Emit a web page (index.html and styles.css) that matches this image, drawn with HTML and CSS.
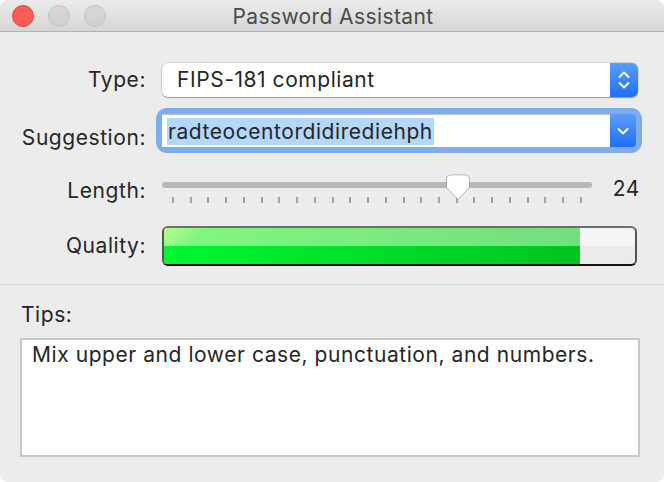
FILE: index.html
```html
<!DOCTYPE html>
<html>
<head>
<meta charset="utf-8">
<link rel="stylesheet" href="styles.css">
</head>
<body>
<div class="window">
  <div class="titlebar">
    <div class="lights">
      <span class="light red"></span>
      <span class="light gray"></span>
      <span class="light gray"></span>
    </div>
    <div class="title">Password Assistant</div>
    <div></div>
  </div>
  <div class="form">
    <div class="row row-type">
      <div class="label">Type:</div>
      <div class="select">
        <div class="select-text">FIPS-181 compliant</div>
        <div class="select-btn">
          <svg width="14" height="20" viewBox="0 0 14 20"><path d="M2.5 7 L7 2.5 L11.5 7 M2.5 13 L7 17.5 L11.5 13" fill="none" stroke="#fff" stroke-width="2" stroke-linecap="round" stroke-linejoin="round"/></svg>
        </div>
      </div>
    </div>
    <div class="row row-sugg">
      <div class="label label-sugg">Suggestion:</div>
      <div class="combo">
        <div class="combo-field"><span class="sel">radteocentordidirediehph</span></div>
        <div class="combo-btn">
          <svg width="14" height="10" viewBox="0 0 14 10"><path d="M2.5 3 L7 7.5 L11.5 3" fill="none" stroke="#fff" stroke-width="2" stroke-linecap="round" stroke-linejoin="round"/></svg>
        </div>
      </div>
    </div>
    <div class="row row-len">
      <div class="label label-len">Length:</div>
      <div class="slider">
        <div class="track"></div>
        <div class="rail">
          <div class="ticks">
            <i></i><i></i><i></i><i></i><i></i><i></i><i></i><i></i><i></i><i></i><i></i><i></i>
            <i></i><i></i><i></i><i></i><i></i><i></i><i></i><i></i><i></i><i></i><i></i><i></i>
          </div>
          <svg class="thumb" style="left:69.57%" width="25" height="27" viewBox="0 0 25 27"><path d="M5 1 H20 Q24 1 24 5 V13.5 L12.5 25.5 L1 13.5 V5 Q1 1 5 1 Z" fill="#fff" stroke="rgba(0,0,0,0.22)" stroke-width="1"/></svg>
        </div>
      </div>
      <div class="value">24</div>
    </div>
    <div class="row row-qual">
      <div class="label label-qual">Quality:</div>
      <div class="meter">
        <div class="meter-fill" style="width:88.3%"></div>
      </div>
    </div>
  </div>
  <div class="sep"></div>
  <div class="tips">
    <div class="tips-label">Tips:</div>
    <div class="tips-box">Mix upper and lower case, punctuation, and numbers.</div>
  </div>
</div>
</body>
</html>
```

FILE: styles.css
```css
html, body {
  margin: 0;
  padding: 0;
  background: #ffffff;
}
body {
  font-family: Inter, "Liberation Sans", sans-serif;
  font-size: 21px;
  letter-spacing: 0.56px;
  color: #262626;
}
.window {
  width: 664px;
  height: 482px;
  background: #ececec;
  border-radius: 8px;
  overflow: hidden;
  display: flex;
  flex-direction: column;
}
.titlebar {
  height: 31px;
  border-bottom: 1px solid #b3b3b3;
  background: linear-gradient(#ebebeb, #d6d6d6);
  display: grid;
  grid-template-columns: 1fr auto 1fr;
  align-items: center;
  border-radius: 8px 8px 0 0;
}
.lights {
  display: flex;
  gap: 14px;
  padding-left: 12px;
}
.light {
  width: 22px;
  height: 22px;
  border-radius: 50%;
  box-sizing: border-box;
}
.light.red {
  background: #fd5d57;
  border: 1px solid #e2463f;
}
.light.gray {
  background: linear-gradient(#d7d7d7, #d0d0d0);
  border: 1px solid #c2c2c2;
}
.title {
  font-size: 21px;
  letter-spacing: 0.4px;
  color: #4b4b4b;
  line-height: 31px;
  padding-top: 1px;
  padding-left: 2px;
}
.form {
  padding-top: 31px;
  padding-right: 26px;
  display: flex;
  flex-direction: column;
}
.row {
  display: flex;
  align-items: flex-start;
}
.label {
  width: 146px;
  text-align: right;
  flex: none;
  margin-right: 16px;
  line-height: 34px;
}
.select {
  flex: 1;
  height: 34px;
  display: flex;
  border-radius: 6px;
  background: #fff;
  box-shadow: 0 0 0 0.5px rgba(0,0,0,0.2), 0 1px 1px rgba(0,0,0,0.28);
  overflow: hidden;
}
.select-text {
  flex: 1;
  line-height: 34px;
  padding-left: 15px;
}
.select-btn {
  width: 28px;
  background: linear-gradient(#5a9dfb, #1f70f6);
  display: flex;
  align-items: center;
  justify-content: center;
}
.row-sugg {
  margin-top: 17px;
}
.label-sugg {
  line-height: 24px;
  padding-top: 12px;
}
.combo {
  flex: 1;
  height: 33px;
  display: flex;
  margin-right: 2px;
  border-radius: 5px;
  box-shadow: 0 0 0 6px #7eacef;
  background: #7eacef;
}
.combo-field {
  flex: 1;
  background: #fff;
  border-top: 1px solid #c4c4c4;
  box-sizing: border-box;
  padding-left: 5px;
  padding-top: 3px;
  line-height: 27px;
}
.sel {
  background: #b3d7ff;
  display: inline-block;
  padding: 0 1px;
}
.combo-btn {
  width: 26px;
  background: linear-gradient(#5a9dfb, #1f70f6);
  border-radius: 0 4px 4px 0;
  display: flex;
  align-items: center;
  justify-content: center;
}
.row-len {
  margin-top: 23px;
}
.label-len {
  line-height: 24px;
  padding-top: 6px;
}
.slider {
  position: relative;
  width: 430px;
  height: 30px;
  flex: none;
}
.track {
  margin-top: 9px;
  height: 6px;
  border-radius: 3px;
  background: #b8b8b8;
}
.rail {
  position: absolute;
  left: 11px;
  right: 10px;
  top: 0;
  bottom: 0;
}
.ticks {
  position: absolute;
  left: 0;
  right: 0;
  top: 24px;
  display: flex;
  justify-content: space-between;
}
.ticks i {
  display: block;
  width: 2px;
  height: 6px;
  margin-left: -1px;
  background: #a3a3a3;
}
.thumb {
  position: absolute;
  top: 1px;
  transform: translateX(-50%);
  filter: drop-shadow(0 0.5px 0.5px rgba(0,0,0,0.25));
}
.value {
  flex: 1;
  text-align: right;
  line-height: 24px;
  padding-top: 4px;
  margin-right: -2px;
}
.row-qual {
  margin-top: 23px;
}
.label-qual {
  line-height: 40px;
}
.meter {
  flex: 1;
  height: 40px;
  box-sizing: border-box;
  border: 2px solid #555;
  border-top-color: #6e6e6e;
  border-bottom-color: #111;
  border-radius: 6px;
  overflow: hidden;
  margin-right: 1px;
  background: linear-gradient(#f4f4f4 0, #f4f4f4 50%, #ebebeb 50%, #ebebeb 100%);
}
.meter-fill {
  height: 100%;
  background:
    linear-gradient(135deg, rgba(190,250,140,0.9) 0, rgba(190,250,140,0) 30px) top left / 100% 50% no-repeat,
    linear-gradient(to right, #7ff97f, #73df7c) top / 100% 50% no-repeat,
    linear-gradient(to right, #00f731, #00c41f) bottom / 100% 50% no-repeat;
}
.sep {
  margin-top: 18px;
  height: 1px;
  background: #d3d3d3;
}
.tips {
  padding: 18px 24px 0 20px;
}
.tips-label {
  line-height: 24px;
  padding-left: 1px;
}
.tips-box {
  margin-top: 11px;
  height: 119px;
  box-sizing: border-box;
  border: 2px solid #c8c8c8;
  background: #fff;
  padding: 3px 10px;
  line-height: 24px;
}
```
